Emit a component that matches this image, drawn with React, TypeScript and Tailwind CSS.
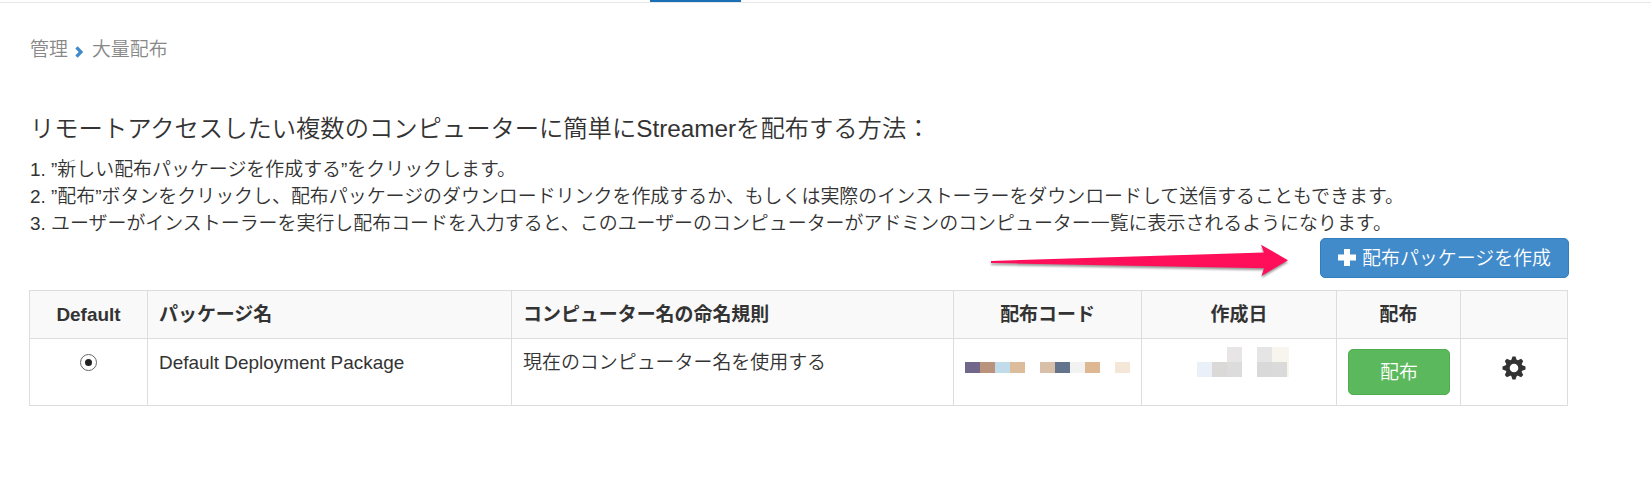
import type { ReactNode } from 'react';
import { clsx } from 'clsx';

const steps = [
  '1. ”新しい配布パッケージを作成する”をクリックします。',
  '2. ”配布”ボタンをクリックし、配布パッケージのダウンロードリンクを作成するか、もしくは実際のインストーラーをダウンロードして送信することもできます。',
  '3. ユーザーがインストーラーを実行し配布コードを入力すると、このユーザーのコンピューターがアドミンのコンピューター一覧に表示されるようになります。',
];

const codeBlocks = [
  'bg-[#70678a]', 'bg-[#bb927b]', 'bg-[#c0dcea]', 'bg-[#dcbc9b]', '',
  'bg-[#d8c0a8]', 'bg-[#63748c]', 'bg-[#f2f2f2]', 'bg-[#deb892]', '',
  'bg-[#f4e7d8]',
];

const dateTop = ['', '', 'bg-[#e7e5e6]', '', 'bg-[#e5e5e5]', 'bg-[#f8f4ee]'];
const dateBottom = ['bg-[#e9f0f8]', 'bg-[#dbd9d8]', 'bg-[#dcdcdc]', '', 'bg-[#d9d9d9]', 'bg-[#dadada]'];

function Blocks({ colors, className, children }: { colors: string[]; className: string; children?: ReactNode }) {
  return (
    <div className="flex">
      {colors.map((color, i) => (
        <div key={i} className={clsx('w-[15px] shrink-0', className, color)} />
      ))}
      {children}
    </div>
  );
}

function GearIcon() {
  return (
    <svg viewBox="-12 -12 24 24" className="block w-6 h-6">
      <circle r="6.4" fill="none" stroke="#333" strokeWidth="4.2" />
      {[0, 45, 90, 135, 180, 225, 270, 315].map((angle) => (
        <path key={angle} d="M-2.9-7.6 L-1.5-11.5 H1.5 L2.9-7.6Z" fill="#333" transform={`rotate(${angle})`} />
      ))}
    </svg>
  );
}

function Th({ children, className }: { children?: ReactNode; className?: string }) {
  return <th className={clsx('border border-[#ddd] px-[11px] font-bold', className)}>{children}</th>;
}

function Td({ children, className }: { children?: ReactNode; className?: string }) {
  return <td className={clsx('border border-[#ddd] align-top', className)}>{children}</td>;
}

export default function App() {
  return (
    <div className="relative h-[502px] overflow-hidden bg-white font-['Liberation_Sans','Noto_Sans_CJK_JP',sans-serif] text-[18.94px] leading-[27px] font-[350] text-[#333]">
      {/* Bottom edge of the tab bar */}
      <div className="h-[3px] border-b border-[#e7e7e7]">
        <div className="ml-[650px] h-[2px] w-[91px] bg-[#1a6fb5]" />
      </div>

      <main className="ml-[29px] w-[1540px]">
        <nav className="flex items-center pt-[33px] pl-px text-[#888]">
          <span>管理</span>
          <svg viewBox="0 0 8 12" className="ml-[7px] mt-[5px] w-2 h-3">
            <path d="M1.5 1.3 L6 6 L1.5 10.7" fill="none" stroke="#428bca" strokeWidth="3.3" />
          </svg>
          <span className="ml-[9px]">大量配布</span>
        </nav>

        <h1 className="mt-[49px] pl-px text-[24.3px] leading-[34px]">
          リモートアクセスしたい複数のコンピューターに簡単にStreamerを配布する方法：
        </h1>

        <div className="mt-[10px] pl-px whitespace-nowrap">
          {steps.map((step) => (
            <p key={step}>{step}</p>
          ))}
        </div>

        <div className="mt-px flex justify-end">
          <button className="flex h-10 w-[249px] items-center rounded-[5px] border border-[#357ebd] bg-[#428bca] pl-[17px] text-white">
            <svg viewBox="0 0 18 17" className="-mt-0.5 w-[18px] h-[17px]">
              <path d="M6 0h6v5.500h6v6h-6V17H6v-5.500H0v-6h6z" fill="#fff" />
            </svg>
            <span className="ml-[6px]">配布パッケージを作成</span>
          </button>
        </div>

        <table className="mt-3 w-[1539px] table-fixed border-collapse">
          <colgroup>
            <col className="w-[118px]" />
            <col className="w-[364px]" />
            <col className="w-[442px]" />
            <col className="w-[188px]" />
            <col className="w-[195px]" />
            <col className="w-[124px]" />
            <col className="w-[107px]" />
          </colgroup>
          <thead>
            <tr className="h-[48px] bg-[#f9f9f9]">
              <Th>Default</Th>
              <Th className="text-left">パッケージ名</Th>
              <Th className="text-left">コンピューター名の命名規則</Th>
              <Th>配布コード</Th>
              <Th>作成日</Th>
              <Th>配布</Th>
              <Th />
            </tr>
          </thead>
          <tbody>
            <tr className="h-[67px]">
              <Td>
                <div className="mx-auto mt-[15px] flex h-[17px] w-[17px] items-center justify-center rounded-full border-[1.5px] border-[#666]">
                  <div className="h-[7px] w-[7px] rounded-full bg-[#222]" />
                </div>
              </Td>
              <Td className="px-[11px] pt-[10px]">Default Deployment Package</Td>
              <Td className="px-[11px] pt-[10px]">現在のコンピューター名を使用する</Td>
              <Td className="pl-[11px] pt-[23px]">
                <Blocks colors={codeBlocks} className="h-[11px]" />
              </Td>
              <Td className="pl-[55px] pt-2">
                <Blocks colors={dateTop} className="h-[15px]">
                  <div className="h-[15px] w-[2px] bg-[#f8f4ee]" />
                </Blocks>
                <Blocks colors={dateBottom} className="h-[15px]">
                  <div className="h-[15px] w-[2px] bg-[#f8f4ee]" />
                </Blocks>
              </Td>
              <Td className="pl-[11px] pt-[10px]">
                <button className="h-[46px] w-[102px] rounded-[5px] border border-[#4cae4c] bg-[#5cb85c] text-white">
                  配布
                </button>
              </Td>
              <Td className="pt-[17px]">
                <div className="flex justify-center">
                  <GearIcon />
                </div>
              </Td>
            </tr>
          </tbody>
        </table>
      </main>

      {/* Arrow pointing at the create button */}
      <svg viewBox="0 0 310 44" className="absolute left-[985px] top-[240px] w-[310px] h-[44px] drop-shadow-[0_2px_1px_rgba(0,0,0,0.4)]">
        <path d="M6 21 L279 12.5 L276 4.7 L303 20.2 L276.5 36 L279 28.2 L6 23Z" fill="#ff0f5a" />
      </svg>
    </div>
  );
}
